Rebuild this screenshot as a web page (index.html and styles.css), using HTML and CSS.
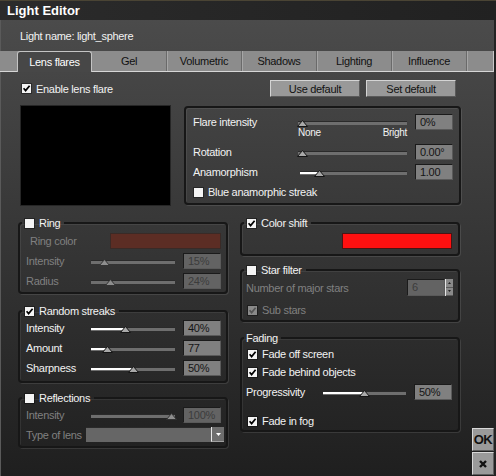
FILE: index.html
```html
<!DOCTYPE html>
<html>
<head>
<meta charset="utf-8">
<title>Light Editor</title>
<link rel="stylesheet" href="styles.css">
</head>
<body>
<div class="window">
  <div class="titlebar">Light Editor</div>
  <div class="content">
    <div class="lightname">Light name: light_sphere</div>
    <div class="tabs">
      <div class="tab active">Lens flares</div>
      <div class="tab">Gel</div>
      <div class="tab">Volumetric</div>
      <div class="tab">Shadows</div>
      <div class="tab">Lighting</div>
      <div class="tab">Influence</div>
    </div>

    <div class="page">
      <div class="toprow">
        <label class="check"><span class="cb"><svg viewBox="0 0 9 9"><path d="M1.6 4.3 3.6 6.6 7.6 1.7"/></svg></span>Enable lens flare</label>
        <div class="btns">
          <button class="btn">Use default</button>
          <button class="btn">Set default</button>
        </div>
      </div>

      <div class="flarerow">
        <div class="preview"></div>
        <div class="panel flare">
          <div class="frow">
            <span>Flare intensity</span>
            <div class="slider" style="--v:0"><svg class="thumb" viewBox="0 0 11 7"><path d="M5.5 .5 10.5 6.5H.5Z"/></svg></div>
            <div class="val">0%</div>
          </div>
          <div class="scale"><span>None</span><span>Bright</span></div>
          <div class="frow">
            <span>Rotation</span>
            <div class="slider" style="--v:0"><svg class="thumb" viewBox="0 0 11 7"><path d="M5.5 .5 10.5 6.5H.5Z"/></svg></div>
            <div class="val">0.00°</div>
          </div>
          <div class="frow">
            <span>Anamorphism</span>
            <div class="slider inset" style="--v:.17"><span class="fill"></span><svg class="thumb" viewBox="0 0 11 7"><path d="M5.5 .5 10.5 6.5H.5Z"/></svg></div>
            <div class="val">1.00</div>
          </div>
          <label class="check frow-check"><span class="cb"></span>Blue anamorphic streak</label>
        </div>
      </div>

      <div class="columns">
        <div class="col">
          <fieldset class="group ring">
            <legend><span class="cb"></span>Ring</legend>
            <div class="colorrow dis">
              <span class="indent">Ring color</span>
              <div class="swatch brown"></div>
            </div>
            <div class="row dis">
              <span>Intensity</span>
              <div class="slider off" style="--v:.12"><svg class="thumb" viewBox="0 0 11 7"><path d="M5.5 .5 10.5 6.5H.5Z"/></svg></div>
              <div class="val off">15%</div>
            </div>
            <div class="row dis">
              <span>Radius</span>
              <div class="slider off" style="--v:.2"><svg class="thumb" viewBox="0 0 11 7"><path d="M5.5 .5 10.5 6.5H.5Z"/></svg></div>
              <div class="val off">24%</div>
            </div>
          </fieldset>

          <fieldset class="group streaks">
            <legend><span class="cb"><svg viewBox="0 0 9 9"><path d="M1.6 4.3 3.6 6.6 7.6 1.7"/></svg></span>Random streaks</legend>
            <div class="row">
              <span>Intensity</span>
              <div class="slider" style="--v:.4"><span class="fill"></span><svg class="thumb" viewBox="0 0 11 7"><path d="M5.5 .5 10.5 6.5H.5Z"/></svg></div>
              <div class="val">40%</div>
            </div>
            <div class="row">
              <span>Amount</span>
              <div class="slider" style="--v:.16"><span class="fill"></span><svg class="thumb" viewBox="0 0 11 7"><path d="M5.5 .5 10.5 6.5H.5Z"/></svg></div>
              <div class="val">77</div>
            </div>
            <div class="row">
              <span>Sharpness</span>
              <div class="slider" style="--v:.5"><span class="fill"></span><svg class="thumb" viewBox="0 0 11 7"><path d="M5.5 .5 10.5 6.5H.5Z"/></svg></div>
              <div class="val">50%</div>
            </div>
          </fieldset>

          <fieldset class="group reflections">
            <legend><span class="cb"></span>Reflections</legend>
            <div class="row dis">
              <span>Intensity</span>
              <div class="slider off" style="--v:1"><svg class="thumb" viewBox="0 0 11 7"><path d="M5.5 .5 10.5 6.5H.5Z"/></svg></div>
              <div class="val off">100%</div>
            </div>
            <div class="lensrow dis">
              <span>Type of lens</span>
              <div class="dropdown"><span class="arrow"><svg viewBox="0 0 5 3"><path d="M0 0H5L2.5 3Z"/></svg></span></div>
            </div>
          </fieldset>
        </div>

        <div class="col">
          <fieldset class="group shift">
            <legend><span class="cb"><svg viewBox="0 0 9 9"><path d="M1.6 4.3 3.6 6.6 7.6 1.7"/></svg></span>Color shift</legend>
            <div class="shiftrow"><div class="swatch red"></div></div>
          </fieldset>

          <fieldset class="group stars">
            <legend><span class="cb"></span>Star filter</legend>
            <div class="starrow dis">
              <span>Number of major stars</span>
              <div class="spin">
                <div class="val off">6</div>
                <div class="spinbtns">
                  <span><svg viewBox="0 0 3 2"><path d="M1.5 0 3 2H0Z"/></svg></span>
                  <span><svg viewBox="0 0 3 2"><path d="M0 0H3L1.5 2Z"/></svg></span>
                </div>
              </div>
            </div>
            <label class="check substars dis"><span class="cb off"><svg viewBox="0 0 9 9"><path d="M1.6 4.3 3.6 6.6 7.6 1.7"/></svg></span>Sub stars</label>
          </fieldset>

          <fieldset class="group fading">
            <legend class="plain">Fading</legend>
            <label class="check fade1"><span class="cb"><svg viewBox="0 0 9 9"><path d="M1.6 4.3 3.6 6.6 7.6 1.7"/></svg></span>Fade off screen</label>
            <label class="check fade2"><span class="cb"><svg viewBox="0 0 9 9"><path d="M1.6 4.3 3.6 6.6 7.6 1.7"/></svg></span>Fade behind objects</label>
            <div class="progrow">
              <span>Progressivity</span>
              <div class="slider" style="--v:.5"><span class="fill"></span><svg class="thumb" viewBox="0 0 11 7"><path d="M5.5 .5 10.5 6.5H.5Z"/></svg></div>
              <div class="val">50%</div>
            </div>
            <label class="check fade3"><span class="cb"><svg viewBox="0 0 9 9"><path d="M1.6 4.3 3.6 6.6 7.6 1.7"/></svg></span>Fade in fog</label>
          </fieldset>
        </div>

        <div class="dock">
          <button class="dockbtn">OK</button>
          <button class="dockbtn"><svg viewBox="0 0 8 8"><path d="M1 1 7 7M7 1 1 7"/></svg></button>
        </div>
      </div>
    </div>
  </div>
</div>
</body>
</html>
```

FILE: styles.css
```css
* { box-sizing: border-box; }

html, body {
  margin: 0;
  padding: 0;
}

body {
  width: 496px;
  height: 476px;
  overflow: hidden;
  background: #1e1e1e;
  font-family: "Liberation Sans", Arial, sans-serif;
  font-size: 11px;
  letter-spacing: -0.3px;
  color: #f2f2f2;
}

.window {
  width: 496px;
  height: 476px;
  display: flex;
  flex-direction: column;
}

/* window caption */
.titlebar {
  height: 20px;
  flex: none;
  border-top: 1px solid #4a4434;
  background: linear-gradient(90deg, #2b2b2b, #212121);
  color: #fff;
  font-weight: bold;
  font-size: 13px;
  letter-spacing: 0;
  line-height: 19px;
  padding-left: 7px;
}

.content {
  flex: 1;
  display: flex;
  flex-direction: column;
  background: linear-gradient(#4b4b4b, #1f1f1f);
  border-right: 2px solid #232323;
  box-shadow: inset 1px 0 0 #5a5a5a;
}

.lightname {
  margin-top: 9px;
  height: 14px;
  line-height: 14px;
  padding-left: 20px;
}

/* tab strip */
.tabs {
  margin-top: 8px;
  height: 21px;
  display: flex;
  padding-left: 17px;
  background: #8c8c8c;
  border-bottom: 1px solid #d6d6d6;
  border-right: 1px solid #c8c8c8;
}

.tab {
  width: 75px;
  height: 20px;
  line-height: 20px;
  text-align: center;
  color: #111;
  border-right: 1px solid #6a6a6a;
  box-shadow: 1px 0 0 #a6a6a6;
}

.tab.active {
  height: 21px;
  background: #474747;
  color: #fff;
  border: 1px solid #c4c4c4;
  border-bottom: none;
  border-radius: 3px 3px 0 0;
  box-shadow: none;
  line-height: 20px;
}

.page {
  flex: 1;
  display: flex;
  flex-direction: column;
}

/* checkboxes */
.check {
  display: flex;
  align-items: center;
  gap: 5px;
  height: 16px;
}

.cb {
  width: 9px;
  height: 9px;
  flex: none;
  display: inline-block;
  vertical-align: middle;
  background: #f4f4f4;
  box-shadow: 0 0 0 1px rgba(0, 0, 0, .35);
}

.cb svg {
  display: block;
  width: 9px;
  height: 9px;
  fill: none;
  stroke: #000;
  stroke-width: 1.7;
}

.cb.off { background: #8a8a8a; }
.cb.off svg { stroke: #555; }

.dis { color: #808080; }

.toprow {
  margin-top: 8px;
  height: 17px;
  display: flex;
  align-items: center;
  padding-left: 22px;
  padding-right: 38px;
}

.btns {
  margin-left: auto;
  display: flex;
  gap: 6px;
}

.btn {
  width: 90px;
  height: 17px;
  padding: 0;
  font: inherit;
  letter-spacing: inherit;
  color: #111;
  background: #999;
  border: 1px solid;
  border-color: #d4d4d4 #5a5a5a #5a5a5a #d4d4d4;
  line-height: 14px;
}

/* preview + flare settings */
.flarerow {
  margin-top: 8px;
  display: flex;
  align-items: flex-start;
  padding-left: 20px;
}

.preview {
  width: 151px;
  height: 101px;
  background: #000;
  border: 1px solid #262626;
}

.panel {
  border: 2px solid #171717;
  border-radius: 4px;
  box-shadow: 1px 1px 0 rgba(255, 255, 255, .1), inset 1px 1px 0 rgba(255, 255, 255, .07);
}

.flare {
  margin-left: 13px;
  margin-top: 1px;
  width: 277px;
  height: 99px;
  padding: 6px 6px 0 7px;
}

.frow {
  display: grid;
  grid-template-columns: 105px 109px 46px;
  align-items: center;
  height: 16px;
}

.frow + .frow { margin-top: 4px; }

.scale {
  margin-left: 105px;
  width: 109px;
  height: 14px;
  margin-top: -2px;
  margin-bottom: 2px;
  line-height: 10px;
  font-size: 10px;
  display: flex;
  justify-content: space-between;
}

.frow-check {
  margin-top: 4px;
  padding-left: 1px;
}

/* sliders */
.slider {
  position: relative;
  height: 16px;
}

.slider::before {
  content: "";
  position: absolute;
  left: 0;
  right: 0;
  top: 7px;
  height: 3px;
  background: #6e6e6e;
  border-top: 1px solid #2a2a2a;
}

.slider.inset::before { left: 2px; }

.fill {
  position: absolute;
  left: 0;
  top: 8px;
  height: 2px;
  background: #fff;
  width: calc(4px + (100% - 8px) * var(--v));
}

.slider.inset .fill { left: 2px; }

.thumb {
  position: absolute;
  top: 6px;
  width: 11px;
  height: 7px;
  left: calc(4px + (100% - 8px) * var(--v) - 5.5px);
  fill: #a9a9a9;
  stroke: #141414;
  stroke-width: 1;
}

.slider.off .thumb { fill: #8e8e8e; stroke: #333; }

/* numeric fields; the 8px left margin separates them from the slider */
.val {
  height: 16px;
  background: #808080;
  border: 1px solid;
  border-color: #1b1b1b #5a5a5a #5a5a5a #1b1b1b;
  color: #151515;
  line-height: 14px;
  padding-left: 4px;
}

.frow .val,
.row .val,
.progrow .val { margin-left: 8px; }

.val.off {
  background: #636363;
  color: #3c3c3c;
}

/* two-column group area */
.columns {
  flex: 1;
  margin-top: 10px;
  display: grid;
  grid-template-columns: 210px 220px 22px;
  column-gap: 12px;
  padding-left: 18px;
}

.col {
  align-self: start;
  display: flex;
  flex-direction: column;
}

.group {
  margin: 0;
  padding: 0;
  min-width: 0;
  border: 2px solid #171717;
  border-radius: 4px;
  box-shadow: 1px 1px 0 rgba(255, 255, 255, .1), inset 1px 1px 0 rgba(255, 255, 255, .07);
}

.group legend {
  margin-left: 2px;
  padding: 0 4px 0 3px;
  height: 14px;
  line-height: 14px;
  display: flex;
  align-items: center;
  gap: 5px;
  color: #f2f2f2;
}

.group legend.plain { padding: 0 3px 0 2px; }

.row {
  display: grid;
  grid-template-columns: 65px 84px 46px;
  align-items: center;
  height: 16px;
  padding: 0 5px 0 6px;
}

.row + .row { margin-top: 4px; }

.ring { padding: 3px 0 3px; }
.streaks { margin-top: 10px; padding: 2px 0 5px; }
.reflections { margin-top: 8px; padding: 2px 0 4px; }

.colorrow {
  display: grid;
  grid-template-columns: 84px 111px;
  align-items: center;
  height: 16px;
  padding-left: 6px;
  margin-bottom: 4px;
}

.indent { padding-left: 4px; }

.swatch {
  height: 16px;
  border: 1px solid #2a2020;
}

.swatch.brown { background: #5c2d24; border-color: #3a2a26; }
.swatch.red { width: 110px; background: #ff1010; border-color: #4a1414; }

.lensrow {
  margin-top: 4px;
  display: grid;
  grid-template-columns: 60px 138px;
  align-items: center;
  height: 15px;
  padding-left: 6px;
}

.dropdown {
  height: 15px;
  background: #666;
  border-top: 1px solid #2a2a2a;
  display: flex;
  justify-content: flex-end;
}

.dropdown .arrow {
  width: 13px;
  height: 15px;
  margin-top: -1px;
  background: #6e6e6e;
  border-left: 1px solid #e8e8e8;
  border-bottom: 1px solid #a0a0a0;
  display: flex;
  align-items: center;
  justify-content: center;
}

.dropdown .arrow svg {
  width: 5px;
  height: 3px;
  fill: #fff;
}

/* right column */
.shift { padding: 3px 0 5px; }

.shiftrow {
  display: flex;
  justify-content: flex-end;
  padding-right: 6px;
}

.stars { margin-top: 7px; padding: 2px 0 2px; }

.starrow {
  display: flex;
  align-items: center;
  justify-content: space-between;
  height: 17px;
  padding: 0 5px 0 4px;
}

.spin { display: flex; }
.spin .val { width: 38px; height: 17px; line-height: 15px; }

.spinbtns {
  width: 8px;
  height: 17px;
  display: flex;
  flex-direction: column;
  border-left: 1px solid #e6e6e6;
}

.spinbtns span {
  flex: 1;
  background: #8a8a8a;
  border-bottom: 1px solid #5a5a5a;
  display: flex;
  align-items: center;
  justify-content: center;
}

.spinbtns svg { width: 3px; height: 2px; fill: #222; }

.substars {
  margin-top: 6px;
  padding-left: 6px;
}

.fading { margin-top: 9px; padding: 1px 0 1px; }

.fading .check { padding-left: 6px; }
.fade2 { margin-top: 2px; }
.fade3 { margin-top: 13px; }

.progrow {
  margin-top: 4px;
  display: grid;
  grid-template-columns: 77px 83px 46px;
  align-items: center;
  height: 16px;
  padding: 0 5px 0 4px;
}

/* OK / cancel */
.dock {
  align-self: end;
  display: flex;
  flex-direction: column;
  gap: 1px;
  margin-bottom: 1px;
}

.dockbtn {
  width: 22px;
  height: 23px;
  padding: 0;
  background: #9a9a9a;
  border: 1px solid;
  border-color: #d8d8d8 #5e5e5e #5e5e5e #d8d8d8;
  color: #111;
  font: bold 13px "Liberation Sans", Arial, sans-serif;
  letter-spacing: -0.5px;
  display: flex;
  align-items: center;
  justify-content: center;
}

.dockbtn svg {
  width: 8px;
  height: 8px;
  stroke: #111;
  stroke-width: 2.4;
}
```
